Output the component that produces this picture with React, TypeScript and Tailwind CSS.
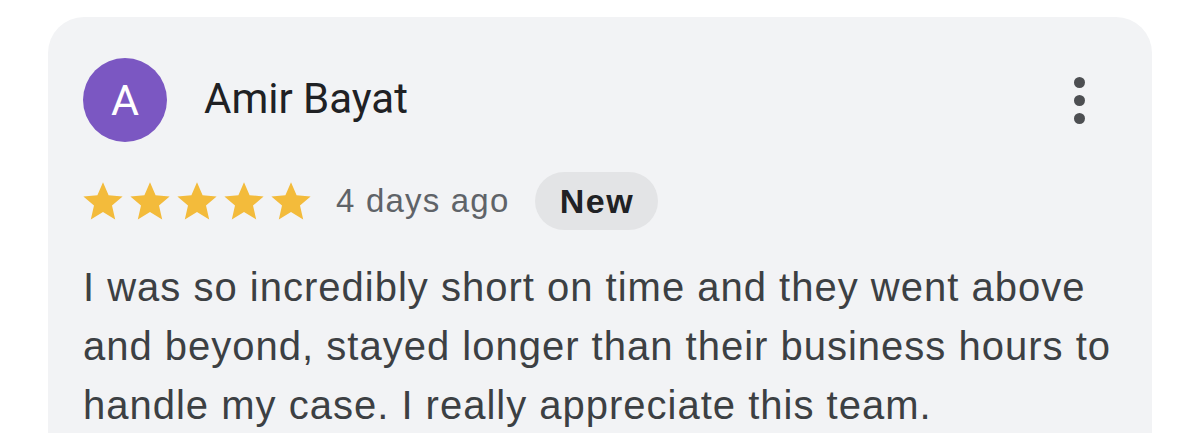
function Star() {
    return (
        <svg viewBox="0 0 24 24" className="w-[48px] h-[48px] -mr-[1px]" fill="#f3bb3b">
            <path d="M12 2.6l2.8 6.5 7 .6-5.3 4.6 1.6 6.9L12 17.5l-6.1 3.7 1.6-6.9L2.2 9.7l7-.6z" />
        </svg>
    );
}

export default function App() {
    return (
        <div className="w-[1200px] h-[433px] bg-white overflow-hidden pt-[17px] pl-[48px] pr-[48px]">
            <div className="bg-[#f2f3f5] rounded-t-[36px] h-[460px] pl-[35px] pr-[30px] pt-[41px]">
                {/* header */}
                <div className="flex items-center justify-between">
                    <div className="flex items-center gap-[37px]">
                        <div className="w-[84px] h-[84px] rounded-full bg-[#7b57c2] flex items-center justify-center text-white text-[43px] font-['Roboto',sans-serif]">
                            A
                        </div>
                        <span className="mb-[4px] text-[42px] text-[#202124] font-['Roboto',sans-serif]">Amir Bayat</span>
                    </div>
                    <div className="flex flex-col gap-[7px] items-center mr-[37px]">
                        <span className="w-[11px] h-[11px] rounded-full bg-[#4d4f52]" />
                        <span className="w-[11px] h-[11px] rounded-full bg-[#4d4f52]" />
                        <span className="w-[11px] h-[11px] rounded-full bg-[#4d4f52]" />
                    </div>
                </div>

                {/* rating row */}
                <div className="flex items-center mt-[30px] font-['Liberation_Sans',sans-serif]">
                    <div className="flex -ml-[4px]">
                        <Star />
                        <Star />
                        <Star />
                        <Star />
                        <Star />
                    </div>
                    <span className="ml-[22px] text-[33px] tracking-[1.2px] text-[#5f6368]">4 days ago</span>
                    <span className="ml-[26px] h-[58px] w-[123px] rounded-full bg-[#e3e4e6] flex items-center justify-center text-[34px] tracking-[1.5px] font-semibold text-[#202124]">
                        New
                    </span>
                </div>

                {/* review text */}
                <p className="mt-[28px] text-[40px] leading-[59px] tracking-[1px] text-[#3c4043] font-['Liberation_Sans',sans-serif]">
                    I was so incredibly short on time and they went above and beyond, stayed longer than their business hours to handle my case. I really appreciate this team.
                </p>
            </div>
        </div>
    );
}
